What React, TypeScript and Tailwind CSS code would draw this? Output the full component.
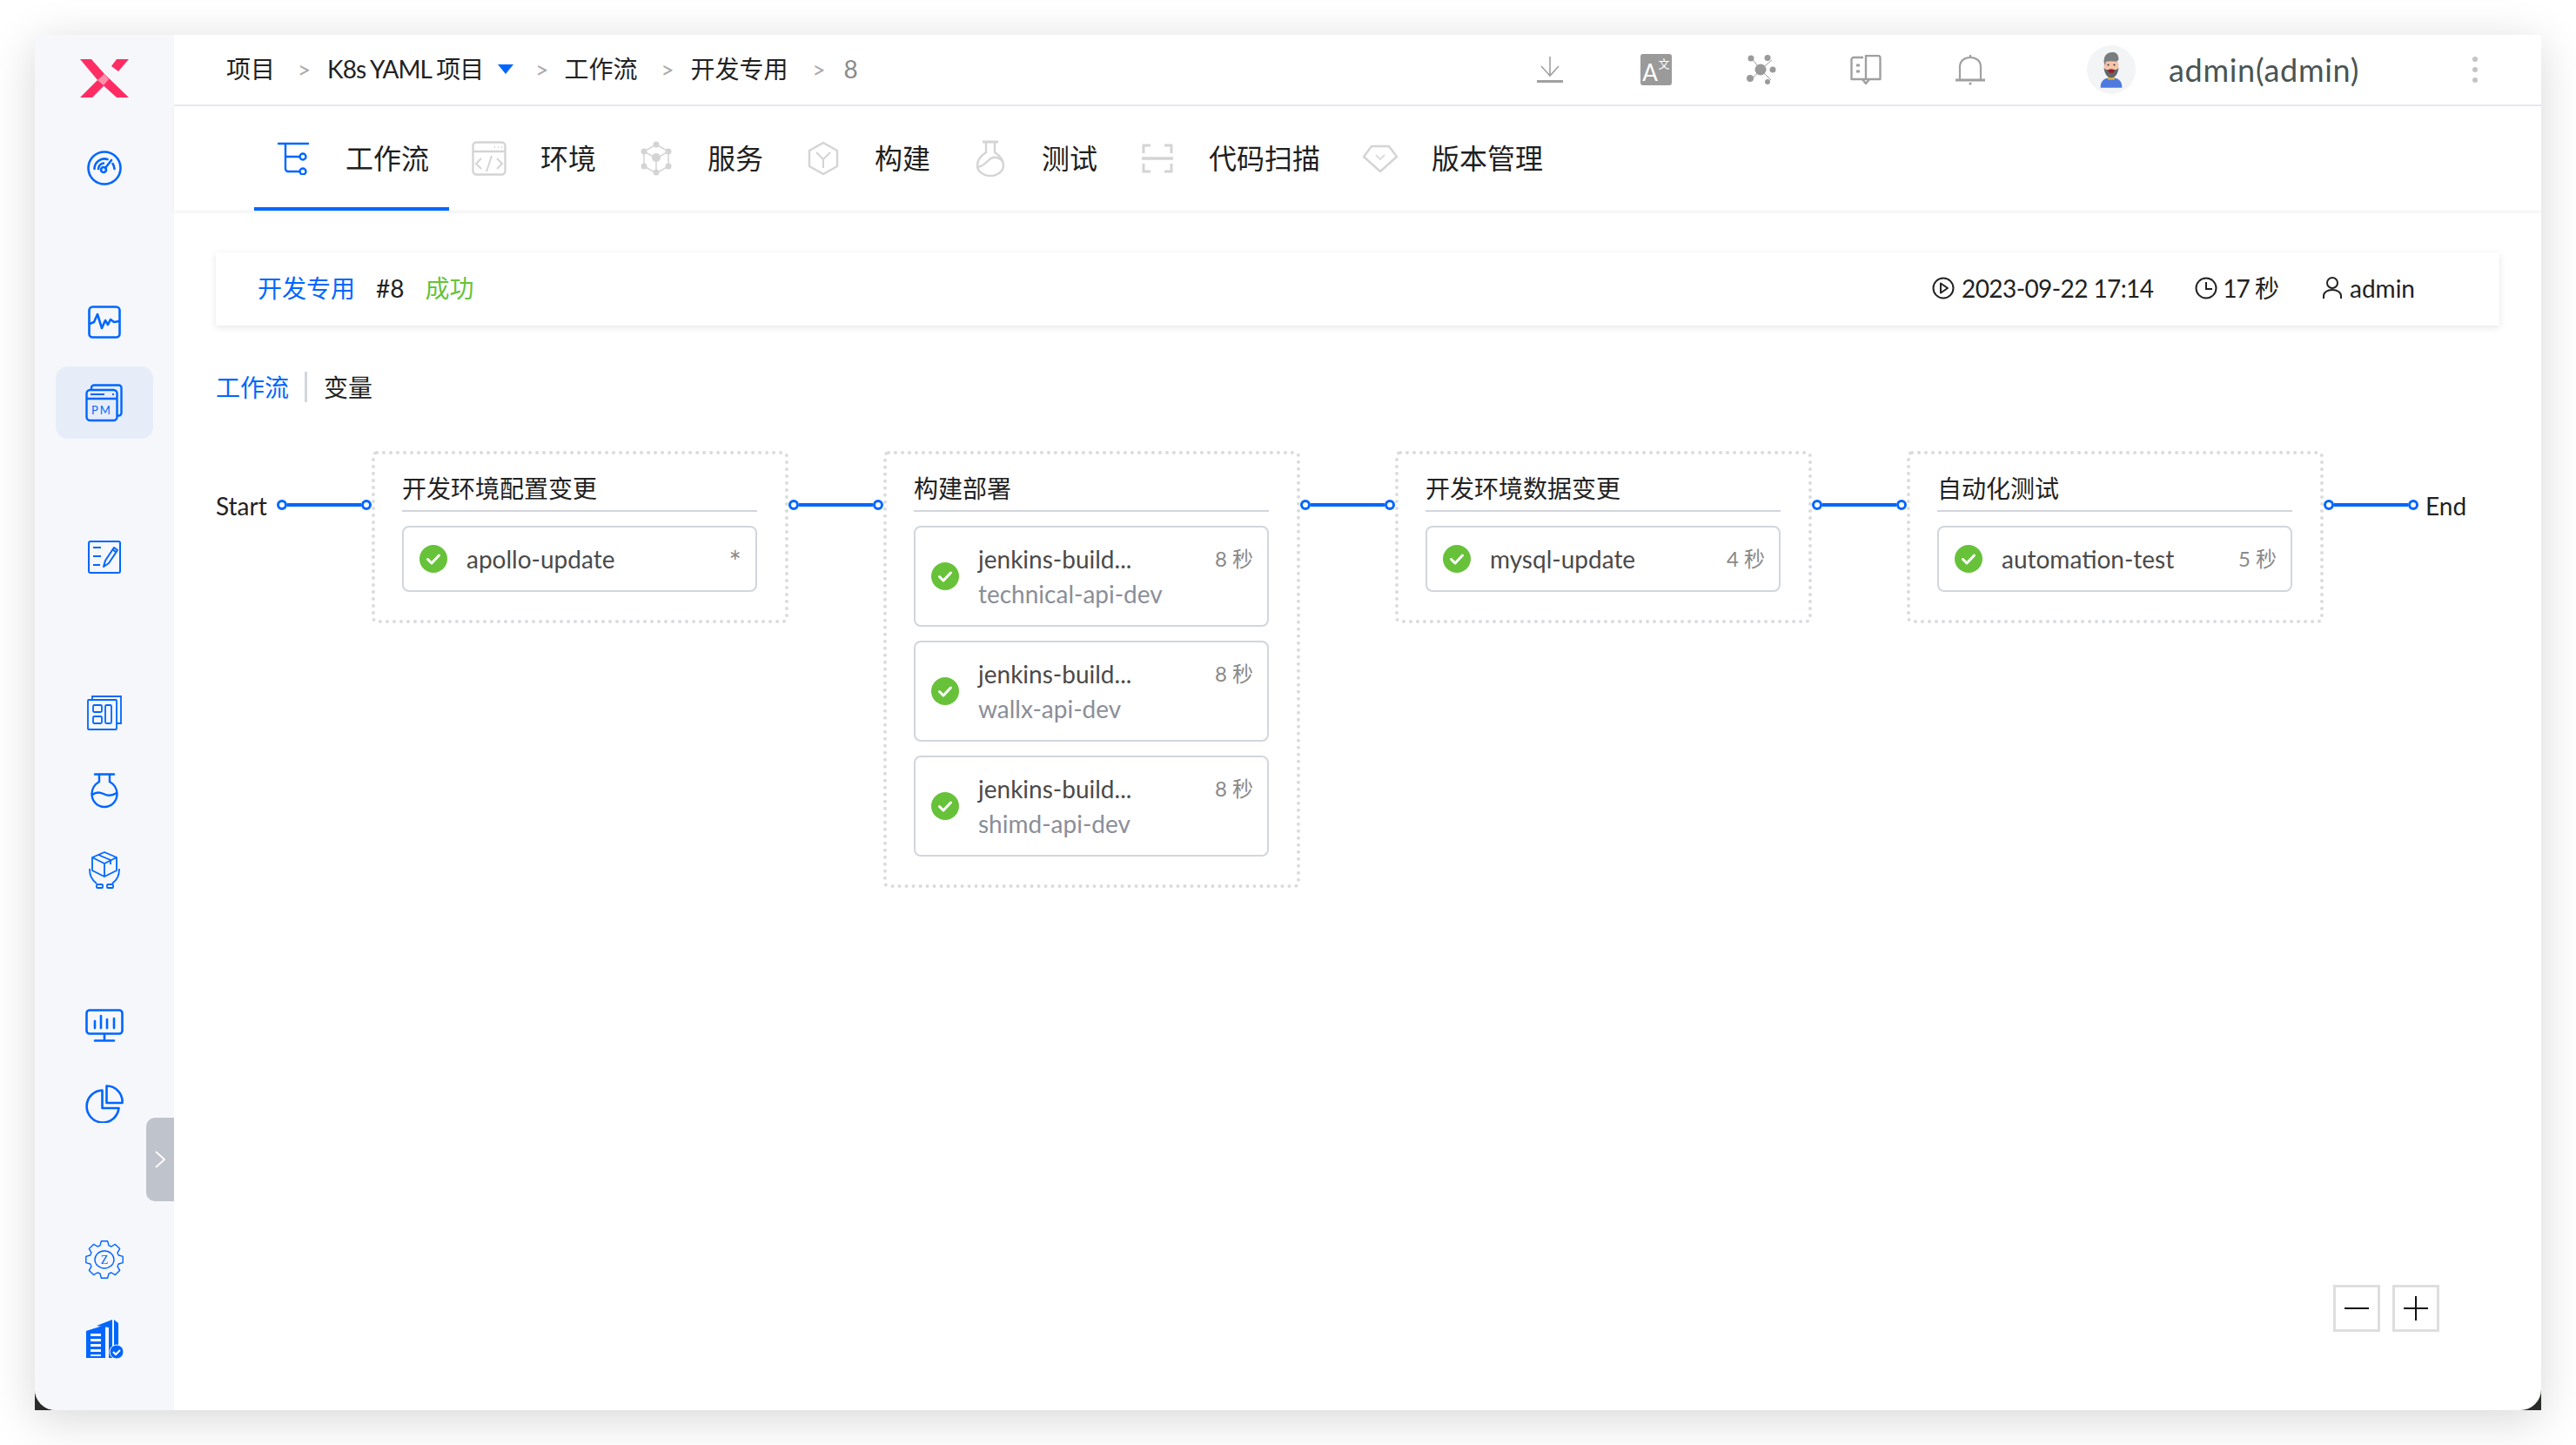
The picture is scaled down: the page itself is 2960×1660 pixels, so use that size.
import React from 'react'

const BLUE = '#0066ff'
const GREY = '#d4d4d4'
const HEAD = '#a0a0a0'

const gearPath = (() => {
  const pts: string[] = []
  const cx = 22
  const cy = 22
  for (let i = 0; i < 8; i++) {
    const a = (i * Math.PI) / 4 - Math.PI / 2
    const add = (r: number, off: number) => {
      pts.push(`${(cx + r * Math.cos(a + off)).toFixed(1)},${(cy + r * Math.sin(a + off)).toFixed(1)}`)
    }
    add(17, -0.3)
    add(21.5, -0.17)
    add(21.5, 0.17)
    add(17, 0.3)
  }
  return 'M' + pts.join('L') + 'Z'
})()

const Logo = () => (
  <svg width="56" height="44" viewBox="0 0 56 44">
    <polygon points="0,0 13,0 28,17 21,25" fill="#ff2d64" />
    <polygon points="42,0 56,0 44,14 36,8" fill="#ff2d64" />
    <polygon points="21,25 28,17 56,44 42,44" fill="#ff2d64" />
    <polygon points="0,44 20,24 28,30 14,44" fill="#ff2d64" />
    <polygon points="20,24 28,17 33,23 27,30" fill="#ff8fab" />
  </svg>
)

const Gauge = () => (
  <svg width="40" height="40" viewBox="0 0 40 40" fill="none" stroke={BLUE} strokeWidth="2.6" strokeLinecap="round">
    <circle cx="20" cy="20" r="18.5" />
    <path d="M8.5 21a11.5 11.5 0 0 1 15-11" />
    <path d="M13 21a7 7 0 0 1 6-6.5" />
    <path d="M31.5 21a11.5 11.5 0 0 0-2-6" />
    <circle cx="19" cy="22" r="3" />
    <path d="M21 20l7-9" />
  </svg>
)

const Wave = () => (
  <svg width="38" height="38" viewBox="0 0 38 38" fill="none" stroke={BLUE} strokeWidth="2.6" strokeLinejoin="round" strokeLinecap="round">
    <rect x="1.5" y="1.5" width="35" height="35" rx="4" />
    <path d="M2 21l5-2 4-9 5 16 4-9 3 5 3-6 4 3 6-1" />
  </svg>
)

const Pm = () => (
  <svg width="44" height="44" viewBox="0 0 44 44" fill="none" stroke={BLUE} strokeWidth="2.4">
    <path d="M7 6V4.5A3 3 0 0 1 10 1.500h28.500a3 3 0 0 1 3 3v29a3 3 0 0 1-3 3H36" />
    <rect x="1.500" y="7" width="35" height="35" rx="4" />
    <path d="M2 17h34" />
    <path d="M6 12h16" strokeWidth="2" />
    <path d="M31 12h2" strokeWidth="2" />
    <text x="19" y="35" fontSize="13" fontFamily="Lato, sans-serif" letterSpacing="2" textAnchor="middle" fill={BLUE} stroke="none">PM</text>
  </svg>
)

const EditCard = () => (
  <svg width="38" height="38" viewBox="0 0 38 38" fill="none" stroke={BLUE} strokeWidth="2">
    <rect x="1" y="1" width="36" height="36" rx="2" />
    <path d="M6 8h9M6 18h9M6 28h8" />
    <path d="M18 30l2-7L30 8l4 3-10 15z" strokeLinejoin="round" />
    <path d="M28 10l4 3" />
  </svg>
)

const Board = () => (
  <svg width="40" height="40" viewBox="0 0 40 40" fill="none" stroke={BLUE} strokeWidth="1.800">
    <path d="M6 5V1h33v31h-5" />
    <rect x="1" y="5" width="33" height="34" rx="1" />
    <rect x="7" y="11" width="10" height="8" rx="1.500" />
    <rect x="7" y="24" width="10" height="8" rx="1.500" />
    <rect x="21" y="11" width="7" height="21" rx="1.500" />
  </svg>
)

const Flask = () => (
  <svg width="32" height="41" viewBox="0 0 32 41" fill="none" stroke={BLUE} strokeWidth="2.400" strokeLinecap="round">
    <path d="M5 1.500h22" />
    <path d="M10 2v8C5 13 1.500 17 1.500 24c0 9 7 15 14.500 15S30.500 33 30.500 24c0-7-3.500-11-8.500-14V2" />
    <path d="M2 25c5-4 9-3 13-1s9 3 15-1" />
  </svg>
)

const BoxHands = () => (
  <svg width="36" height="44" viewBox="0 0 36 44" fill="none" stroke={BLUE} strokeWidth="1.800" strokeLinejoin="round">
    <path d="M18 1L32 7v15l-14 7-14-7V7z" />
    <path d="M4 7l14 7 14-7M18 14v15" />
    <path d="M11 4l14 6v5" />
    <path d="M1 20c0 8 2 12 8 17M35 20c0 8-2 12-8 17" />
    <rect x="9" y="38" width="7" height="4" rx="1" />
    <rect x="21" y="38" width="7" height="4" rx="1" />
  </svg>
)

const MonitorChart = () => (
  <svg width="44" height="38" viewBox="0 0 44 38" fill="none" stroke={BLUE} strokeWidth="2.600" strokeLinecap="round">
    <rect x="1.500" y="1.500" width="41" height="27" rx="3.500" />
    <path d="M22 29v7M11 36.500h22" />
    <path d="M11 14v8M18 8v14M25 12v10M33 11v11" />
  </svg>
)

const Pie = () => (
  <svg width="44" height="44" viewBox="0 0 44 44" fill="none" stroke={BLUE} strokeWidth="2.600">
    <path d="M19.500 6.500A18.500 18.500 0 1 0 38.500 27H19.500z" strokeLinejoin="round" />
    <path d="M24.500 1.500A18 18 0 0 1 42.500 21H24.500z" strokeLinejoin="round" />
  </svg>
)

const Gear = () => (
  <svg width="44" height="44" viewBox="0 0 44 44" fill="none" stroke={BLUE} strokeWidth="1.400">
    <path d={gearPath} strokeLinejoin="round" />
    <ellipse cx="22" cy="22" rx="11" ry="10" />
    <text x="22" y="27" fontSize="14" fontFamily="'Liberation Serif', serif" textAnchor="middle" fill={BLUE} stroke="none">Z</text>
  </svg>
)

const Building = () => (
  <svg width="43" height="45" viewBox="0 0 43 45" fill={BLUE}>
    <polygon points="12,7 30,0 30,44 26,44 26,9" />
    <polygon points="32,0 37,4 37,30 32,36" />
    <polygon points="0,13 22,6 22,44 0,44" />
    <g fill="#f5f7fb">
      <rect x="5" y="16" width="12" height="3" />
      <rect x="5" y="22" width="12" height="3" />
      <rect x="5" y="28" width="12" height="3" />
      <rect x="5" y="34" width="12" height="3" />
      <rect x="5" y="40" width="12" height="2" />
    </g>
    <circle cx="35" cy="37" r="8" stroke="#f5f7fb" strokeWidth="1" />
    <path d="M31 37l3 3 5-5" fill="none" stroke="#fff" strokeWidth="2" />
  </svg>
)

const TabFlow = ({ color }: { color: string }) => (
  <svg width="40" height="38" viewBox="0 0 40 38" fill="none" stroke={color} strokeWidth="2.400" strokeLinecap="round">
    <path d="M2 2h34" />
    <path d="M10 2v29a3 3 0 0 0 3 3h13" />
    <path d="M10 17h16" />
    <circle cx="30" cy="17" r="3.500" />
    <circle cx="30" cy="34" r="3.500" />
  </svg>
)

const TabEnv = ({ color }: { color: string }) => (
  <svg width="40" height="40" viewBox="0 0 40 40" fill="none" stroke={color} strokeWidth="2.400">
    <rect x="1.500" y="1.500" width="37" height="37" rx="4" />
    <path d="M2 12h36" />
    <path d="M26 7h1M30 7h1M34 7h1" strokeWidth="2" />
    <path d="M11 20l-6 6 6 6M29 20l6 6-6 6M23 17l-6 18" strokeWidth="2" />
  </svg>
)

const TabService = ({ color }: { color: string }) => (
  <svg width="40" height="40" viewBox="0 0 40 40" fill="none" stroke={color} strokeWidth="1.500">
    <path d="M20 4L34 12v17L20 37 6 29V12z" />
    <path d="M20 20v17M6 12l14 8 14-8" />
    <g fill={color} stroke="none">
      <circle cx="20" cy="4" r="3.500" />
      <circle cx="34" cy="12" r="3.500" />
      <circle cx="34" cy="29" r="3.500" />
      <circle cx="20" cy="36" r="3.500" />
      <circle cx="6" cy="29" r="3.500" />
      <circle cx="6" cy="12" r="3.500" />
      <circle cx="20" cy="19" r="5" />
    </g>
  </svg>
)

const TabBuild = ({ color }: { color: string }) => (
  <svg width="40" height="40" viewBox="0 0 40 40" fill="none" stroke={color} strokeWidth="2.400">
    <path d="M20 2L36 11v18L20 38 4 29V11z" strokeLinejoin="round" />
    <path d="M12 13l8 8 8-8M20 21v10" strokeWidth="2" />
  </svg>
)

const TabTest = ({ color }: { color: string }) => (
  <svg width="40" height="42" viewBox="0 0 40 42" fill="none" stroke={color} strokeWidth="2.400">
    <path d="M11 2h18" strokeWidth="3" />
    <path d="M15 3v11C9 18 5 23 5 29c0 7 7 12 15 12s15-5 15-12c0-6-4-11-10-15V3" />
    <path d="M5 31c6-1 9-4 13-8s10-5 16 1" />
  </svg>
)

const TabScan = ({ color }: { color: string }) => (
  <svg width="40" height="34" viewBox="0 0 40 34" fill="none" stroke={color} strokeWidth="3">
    <path d="M4 11V2h8M28 2h8v9M4 23v9h8M28 32h8v-9" />
    <path d="M2 17h36" strokeWidth="3.500" />
  </svg>
)

const TabVersion = ({ color }: { color: string }) => (
  <svg width="40" height="32" viewBox="0 0 40 32" fill="none" stroke={color} strokeWidth="2.400" strokeLinejoin="round">
    <path d="M10 2h20l9 12-19 17L1 14z" />
    <path d="M15 12l5 5 5-5" strokeWidth="1.600" />
  </svg>
)

const Check = () => (
  <svg width="32" height="32" viewBox="0 0 32 32" className="shrink-0">
    <circle cx="16" cy="16" r="16" fill="#67c23a" />
    <path d="M9.500 16.500l4.500 4.500 8.500-9" fill="none" stroke="#fff" strokeWidth="3" strokeLinecap="round" strokeLinejoin="round" />
  </svg>
)

const Avatar = () => (
  <div className="w-[56px] h-[56px] rounded-full bg-[#f3f4f6] overflow-hidden flex items-center justify-center">
    <svg width="34" height="42" viewBox="0 0 44 54">
      <path d="M6 54c0-9 4-15 16-15s16 6 16 15z" fill="#4f7ae0" />
      <rect x="17" y="35" width="10" height="7" fill="#e3b341" />
      <ellipse cx="22" cy="21" rx="11" ry="13" fill="#f6c5ab" />
      <path d="M11 16c0-10 4-15 13-15 5 0 9 3 9 11l-3 3c-6-1-12-1-16 0l-1 6z" fill="#7a7d80" />
      <path d="M11 24c1 9 5 15 11 15s10-6 11-15l-3 3H14z" fill="#63666a" />
      <ellipse cx="22" cy="29" rx="4.500" ry="3" fill="#9b1c2a" />
      <circle cx="17.500" cy="20" r="1.300" fill="#333" />
      <circle cx="26.500" cy="20" r="1.300" fill="#333" />
    </svg>
  </div>
)

const HeadDownload = () => (
  <svg width="32" height="30" viewBox="0 0 32 30" fill="none" stroke={HEAD} strokeWidth="1.600">
    <path d="M16 0v22M6 11l10 11 10-11" />
    <path d="M1 28.500h30" strokeWidth="3" />
  </svg>
)

const HeadTranslate = () => (
  <svg width="36" height="36" viewBox="0 0 36 36">
    <rect width="36" height="36" rx="3" fill="#9a9a9a" />
    <text x="11" y="31" fontSize="26" fontFamily="Lato, sans-serif" textAnchor="middle" fill="#fff">A</text>
    <text x="27" y="16" fontSize="13" fontFamily="'Noto Sans CJK SC', sans-serif" textAnchor="middle" fill="#fff">文</text>
  </svg>
)

const HeadNetwork = () => (
  <svg width="34" height="34" viewBox="0 0 34 34" fill="#9a9a9a" stroke="#9a9a9a">
    <path d="M16 17L6 4M16 17l13-11M16 17L5 29M16 17l12 12" strokeWidth="1" />
    <g stroke="none">
      <circle cx="16" cy="17" r="6.500" />
      <circle cx="5" cy="4" r="3.500" />
      <circle cx="24" cy="3.500" r="3.500" />
      <circle cx="4" cy="27" r="4" />
      <circle cx="30" cy="17" r="3.500" />
      <circle cx="24" cy="31" r="3" />
    </g>
  </svg>
)

const HeadBook = () => (
  <svg width="36" height="34" viewBox="0 0 36 34" fill="none" stroke={HEAD} strokeWidth="2.400" strokeLinejoin="round">
    <path d="M15 3H4A2.500 2.500 0 0 0 1.500 5.500V28h33V3.500A2.500 2.500 0 0 0 32 1H18v27" />
    <path d="M14 28l4 5 4-5" />
    <path d="M7 12h4M7 19h4" strokeWidth="3" />
  </svg>
)

const HeadBell = () => (
  <svg width="36" height="36" viewBox="0 0 36 36" fill="none" stroke={HEAD} strokeWidth="2.200" strokeLinejoin="round">
    <path d="M18 1v3" />
    <path d="M6 29V15C6 8 11 4 18 4s12 4 12 11v14" />
    <path d="M1 30h34" strokeWidth="2.800" />
    <circle cx="18" cy="34" r="1.600" fill={HEAD} stroke="none" />
  </svg>
)

const sideItems: { node: React.ReactNode; cls: string }[] = [
  { node: <Logo />, cls: 'mt-[28px] h-[44px]' },
  { node: <Gauge />, cls: 'mt-[61px] h-[40px]' },
  { node: <Wave />, cls: 'mt-[138px] h-[38px]' },
  { node: <Pm />, cls: 'mt-[32px] h-[83px] w-[112px] rounded-[14px] bg-[#e6edf9]' },
  { node: <EditCard />, cls: 'mt-[117px] h-[38px]' },
  { node: <Board />, cls: 'mt-[140px] h-[40px]' },
  { node: <Flask />, cls: 'mt-[49px] h-[41px]' },
  { node: <BoxHands />, cls: 'mt-[49px] h-[44px]' },
  { node: <MonitorChart />, cls: 'mt-[137px] h-[38px]' },
  { node: <Pie />, cls: 'mt-[49px] h-[44px]' },
  { node: <Gear />, cls: 'mt-[135px] h-[44px]' },
  { node: <Building />, cls: 'mt-[47px] h-[45px]' },
]

const tabs = [
  { label: '工作流', Icon: TabFlow, active: true },
  { label: '环境', Icon: TabEnv },
  { label: '服务', Icon: TabService },
  { label: '构建', Icon: TabBuild },
  { label: '测试', Icon: TabTest },
  { label: '代码扫描', Icon: TabScan },
  { label: '版本管理', Icon: TabVersion },
]

const Sep = () => <span className="text-[#a8a8a8] text-[26px]">&gt;</span>

const Job = ({ name, sub, time }: { name: string; sub?: string; time: string }) => (
  <div className={`flex items-center rounded-[8px] border-2 border-[#d2d6dc] pl-[18px] pr-[16px] pb-[1px] bg-white ${sub ? 'h-[116px]' : 'h-[76px]'}`}>
    <Check />
    <div className="ml-[22px] flex-1 min-w-0">
      <div className="flex items-center justify-between h-[40px]">
        <span className="text-[28px] text-[#4a4a4a]">{name}</span>
        <span className={`${time === '*' ? 'text-[34px] text-[#8a8a8a] pt-[6px]' : 'text-[24px] text-[#8a8a8a]'}`}>{time}</span>
      </div>
      {sub && <div className="text-[28px] text-[#8b8e97] h-[40px] leading-[40px]">{sub}</div>}
    </div>
  </div>
)

const Stage = ({ title, children }: { title: string; children: React.ReactNode }) => (
  <div className="w-[479px] shrink-0 rounded-[6px] border-4 border-dotted border-[#d9dbde] pl-[31px] pr-[32px] pb-[32px] bg-white">
    <div className="h-[66px] flex items-end pb-[4px] border-b-2 border-[#d2d6dc] text-[28px] text-[#222]">{title}</div>
    <div className="mt-[16px] flex flex-col gap-[16px]">{children}</div>
  </div>
)

const Link = () => (
  <div className="w-[109px] shrink-0 mt-[56px] flex items-center h-[12px]">
    <span className="w-[12px] h-[12px] rounded-full border-[3px] border-[#0066ff] bg-white shrink-0" />
    <span className="flex-1 h-[4px] bg-[#0066ff]" />
    <span className="w-[12px] h-[12px] rounded-full border-[3px] border-[#0066ff] bg-white shrink-0" />
  </div>
)

const App: React.FC = () => {
  return (
    <div className="w-[2960px] h-[1660px] bg-white pt-[40px] pl-[40px] overflow-hidden font-[Lato,'Noto_Sans_CJK_SC',sans-serif]">
      <div className="w-[2880px] h-[1580px] bg-[#2a2c2a] shadow-[0_10px_50px_rgba(0,0,0,0.16)]">
        <div className="w-full h-full flex rounded-b-[24px] overflow-hidden bg-white">
          {/* sidebar */}
          <div className="relative w-[160px] shrink-0 bg-[#f5f7fb] flex flex-col items-center">
            {sideItems.map((item, i) => (
              <div key={i} className={`flex items-center justify-center shrink-0 ${item.cls}`}>
                {item.node}
              </div>
            ))}
            <div className="absolute right-0 top-[1244px] w-[32px] h-[96px] rounded-l-[10px] bg-[#bfc3cb] flex items-center justify-center">
              <svg width="14" height="22" viewBox="0 0 14 22" fill="none" stroke="#fff" strokeWidth="1.800">
                <path d="M2 2l10 9-10 9" />
              </svg>
            </div>
          </div>

          <div className="relative flex-1 min-w-0">
            {/* header */}
            <div className="h-[82px] border-b-2 border-[#e8e9ee] flex items-center pl-[60px] pr-[73px] text-[28px] text-[#222]">
              <div className="flex items-center pb-[2px]">
                <span>项目</span>
                <span className="ml-[26px]"><Sep /></span>
                <span className="ml-[19px] tracking-[-1px]">K8s YAML 项目</span>
                <svg width="18" height="11" viewBox="0 0 18 11" className="ml-[17px]">
                  <polygon points="0,0 18,0 9,11" fill={BLUE} />
                </svg>
                <span className="ml-[25px]"><Sep /></span>
                <span className="ml-[18px]">工作流</span>
                <span className="ml-[27px]"><Sep /></span>
                <span className="ml-[19px]">开发专用</span>
                <span className="ml-[28px]"><Sep /></span>
                <span className="ml-[21px] text-[#8a8a8a]">8</span>
              </div>
              <div className="ml-auto flex items-center">
                <HeadDownload />
                <span className="ml-[88px]"><HeadTranslate /></span>
                <span className="ml-[86px]"><HeadNetwork /></span>
                <span className="ml-[85px]"><HeadBook /></span>
                <span className="ml-[84px]"><HeadBell /></span>
                <span className="ml-[116px]"><Avatar /></span>
                <span className="ml-[38px] text-[36px] text-[#4a5553] w-[218px] tracking-[0.7px]">admin(admin)</span>
                <span className="ml-[131px] flex flex-col gap-[6px]">
                  <i className="w-[6px] h-[6px] rounded-full bg-[#c4c4c4]" />
                  <i className="w-[6px] h-[6px] rounded-full bg-[#c4c4c4]" />
                  <i className="w-[6px] h-[6px] rounded-full bg-[#c4c4c4]" />
                </span>
              </div>
            </div>

            {/* tabs */}
            <div className="h-[120px] flex pl-[92px] shadow-[0_2px_4px_rgba(0,0,0,0.06)]">
              {tabs.map(({ label, Icon, active }) => (
                <div
                  key={label}
                  className={`flex items-center pl-[26px] pr-[23px] border-b-4 pt-[3px] ${active ? 'border-[#0066ff]' : 'border-transparent'}`}
                >
                  <span className="w-[40px] flex justify-center">
                    <Icon color={active ? BLUE : GREY} />
                  </span>
                  <span className="ml-[39px] text-[32px] text-[#1f1f1f]">{label}</span>
                </div>
              ))}
            </div>

            <div className="px-[48px] pt-[48px]">
              {/* task summary */}
              <div className="h-[84px] flex items-center pl-[48px] pr-[97px] pb-[2px] bg-white shadow-[0_2px_8px_rgba(0,0,0,0.1)] text-[28px]">
                <span className="text-[#0066ff]">开发专用</span>
                <span className="ml-[24px] text-[#222]">#8</span>
                <span className="ml-[24px] text-[#67c23a]">成功</span>
                <div className="ml-auto flex items-center text-[#222]">
                  <svg width="26" height="26" viewBox="0 0 26 26" fill="none" stroke="#222" strokeWidth="2">
                    <circle cx="13" cy="13" r="11.500" />
                    <path d="M10 7.500l8 5.500-8 5.500z" strokeLinejoin="round" />
                  </svg>
                  <span className="ml-[8px] tracking-[-0.6px]">2023-09-22 17:14</span>
                  <svg width="26" height="26" viewBox="0 0 26 26" fill="none" stroke="#222" strokeWidth="2" className="ml-[48px]">
                    <circle cx="13" cy="13" r="11.500" />
                    <path d="M13 6v8h7" />
                  </svg>
                  <span className="ml-[6px] tracking-[-1px]">17 秒</span>
                  <svg width="24" height="26" viewBox="0 0 24 26" fill="none" stroke="#222" strokeWidth="2" className="ml-[50px]">
                    <circle cx="12" cy="7" r="6" />
                    <path d="M2 25v-3c0-4 4-7 10-7s10 3 10 7v3" />
                  </svg>
                  <span className="ml-[8px]">admin</span>
                </div>
              </div>

              {/* sub tabs */}
              <div className="mt-[53px] h-[35px] flex items-center text-[28px]">
                <span className="text-[#0066ff]">工作流</span>
                <span className="ml-[18px] w-[3px] h-[35px] bg-[#d2d6dc]" />
                <span className="ml-[19px] text-[#222]">变量</span>
              </div>

              {/* pipeline */}
              <div className="mt-[56px] flex items-start">
                <div className="flex items-start w-[179px] shrink-0">
                  <span className="w-[70px] mt-[42px] text-[28px] text-[#222]">Start</span>
                  <Link />
                </div>
                <Stage title="开发环境配置变更">
                  <Job name="apollo-update" time="*" />
                </Stage>
                <Link />
                <Stage title="构建部署">
                  <Job name="jenkins-build..." sub="technical-api-dev" time="8 秒" />
                  <Job name="jenkins-build..." sub="wallx-api-dev" time="8 秒" />
                  <Job name="jenkins-build..." sub="shimd-api-dev" time="8 秒" />
                </Stage>
                <Link />
                <Stage title="开发环境数据变更">
                  <Job name="mysql-update" time="4 秒" />
                </Stage>
                <Link />
                <Stage title="自动化测试">
                  <Job name="automation-test" time="5 秒" />
                </Stage>
                <Link />
                <span className="ml-[8px] mt-[42px] text-[28px] text-[#222]">End</span>
              </div>
            </div>

            {/* zoom controls */}
            <div className="absolute right-[117px] bottom-[90px] flex gap-[14px]">
              <div className="w-[54px] h-[54px] border-[3px] border-[#dedede] flex items-center justify-center">
                <span className="w-[28px] h-[2px] bg-[#111]" />
              </div>
              <div className="relative w-[54px] h-[54px] border-[3px] border-[#dedede] flex items-center justify-center">
                <span className="w-[28px] h-[2px] bg-[#111]" />
                <span className="absolute w-[2px] h-[28px] bg-[#111]" />
              </div>
            </div>
          </div>
        </div>
      </div>
    </div>
  )
}

export default App
